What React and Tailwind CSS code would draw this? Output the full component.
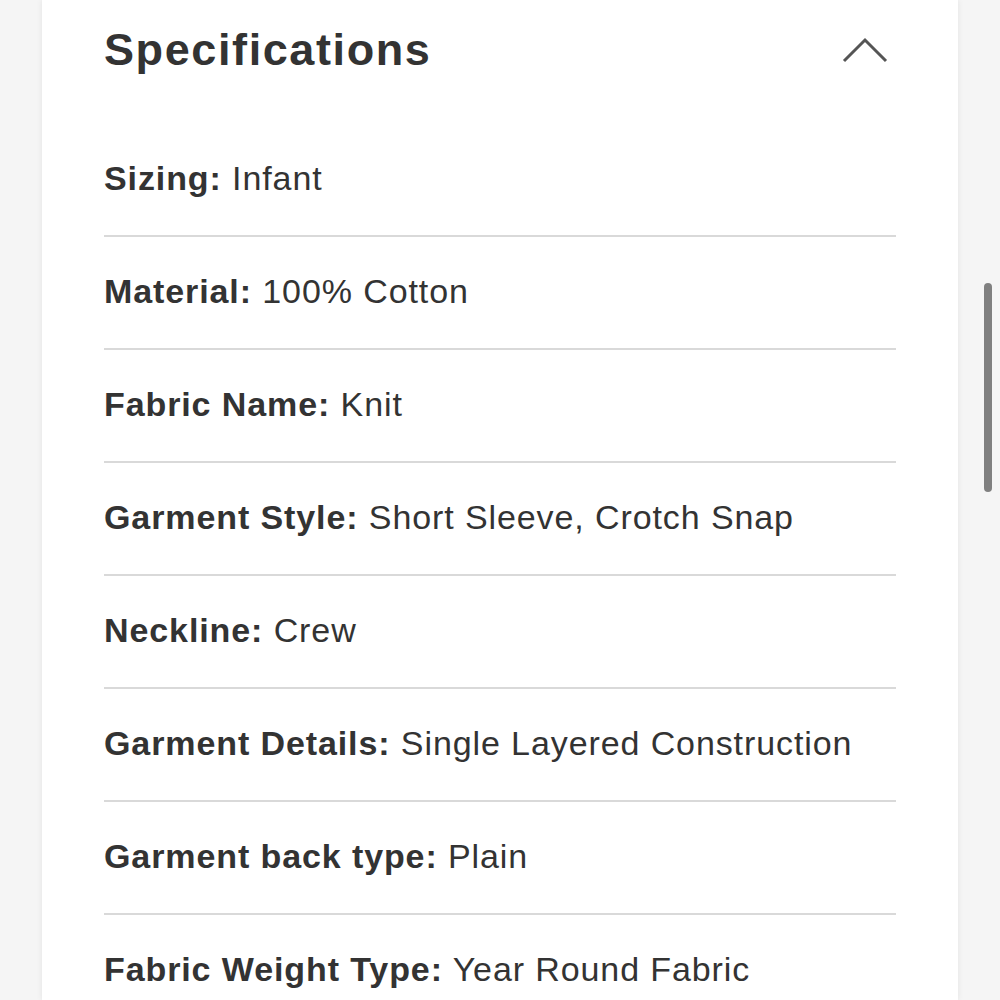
const specs = [
  ['Sizing', 'Infant'],
  ['Material', '100% Cotton'],
  ['Fabric Name', 'Knit'],
  ['Garment Style', 'Short Sleeve, Crotch Snap'],
  ['Neckline', 'Crew'],
  ['Garment Details', 'Single Layered Construction'],
  ['Garment back type', 'Plain'],
  ['Fabric Weight Type', 'Year Round Fabric'],
];

export default function App() {
  return (
    <div className="relative h-[1000px] w-[1000px] overflow-hidden bg-[#f5f5f5] font-['Liberation_Sans',Arial,sans-serif] text-[#333]">
      <div className="mx-[42px] h-full bg-white shadow-[0_0_6px_rgba(0,0,0,0.08)]">
        <div className="px-[62px]">
          <div className="flex h-[124px] items-start justify-between pt-[24px]">
            <h2 className="text-[45px] font-bold leading-[52px] tracking-[1.6px]">Specifications</h2>
            <svg width="48" height="28" viewBox="0 0 48 28" className="mr-[7px] mt-[12px]" fill="none">
              <path d="M3 25 L24 4 L45 25" stroke="#555" strokeWidth="3" />
            </svg>
          </div>
          {specs.map(([label, value]) => (
            <div key={label} className="flex h-[113px] items-center border-b-2 border-[#d9d9d9] pb-[3px] text-[34px] leading-none tracking-[0.9px]">
              <span>
                <span className="font-bold">{label}:</span> {value}
              </span>
            </div>
          ))}
        </div>
      </div>
      <div className="absolute left-[984px] top-[283px] h-[209px] w-[8px] rounded-full bg-[#808080]" />
    </div>
  );
}
